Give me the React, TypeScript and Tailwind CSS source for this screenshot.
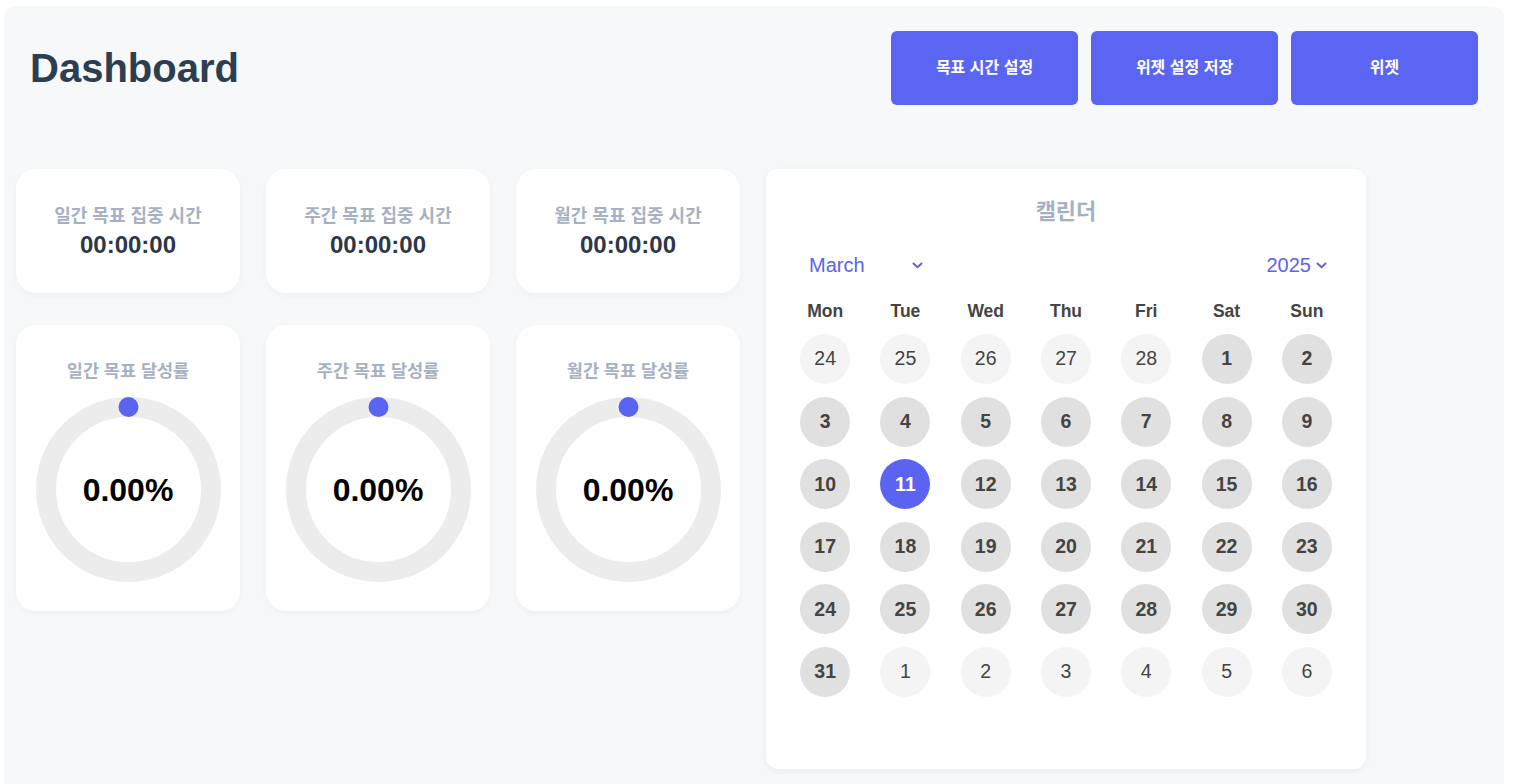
import React from 'react';

const FONT = { fontFamily: '"Liberation Sans", "Noto Sans CJK KR", Arial, sans-serif' };

const timeCards = ['일간 목표 집중 시간', '주간 목표 집중 시간', '월간 목표 집중 시간'];
const rateCards = ['일간 목표 달성률', '주간 목표 달성률', '월간 목표 달성률'];
const weekDays = ['Mon', 'Tue', 'Wed', 'Thu', 'Fri', 'Sat', 'Sun'];

type Day = { n: number; current: boolean };

const buildDays = (): Day[] => {
    const days: Day[] = [];
    for (let d = 24; d <= 28; d++) days.push({ n: d, current: false });
    for (let d = 1; d <= 31; d++) days.push({ n: d, current: true });
    for (let d = 1; d <= 6; d++) days.push({ n: d, current: false });
    return days;
};

const Chevron = () => (
    <svg width="11" height="7" viewBox="0 0 11 7" fill="none">
        <path d="M1.5 1.5 L5.5 5.2 L9.5 1.5" stroke="#5a64f0" strokeWidth="2" strokeLinecap="round" strokeLinejoin="round" />
    </svg>
);

const Ring = () => (
    <svg width="185" height="185" viewBox="0 0 185 185">
        <circle cx="92.5" cy="92.5" r="82.5" fill="none" stroke="#ececec" strokeWidth="20" />
        <circle cx="92.5" cy="10" r="10" fill="#5a64f0" />
    </svg>
);

const App = () => {
    const days = buildDays();

    return (
        <div className="bg-white min-h-screen pl-[4px] pt-[6px]" style={FONT}>
            <div className="w-[1500px] rounded-[12px] bg-[#f7f8fa] px-[12px] pb-[30px]">
                {/* header */}
                <div className="flex items-center justify-between px-[14px] pt-[25px]">
                    <h1 className="text-[40px] font-bold text-[#2c3e50] leading-none">Dashboard</h1>
                    <div className="flex gap-[13px]">
                        {['목표 시간 설정', '위젯 설정 저장', '위젯'].map((label) => (
                            <button
                                key={label}
                                className="w-[187px] h-[74px] rounded-[6px] bg-[#5a66f1] text-white text-[16px] font-semibold"
                            >
                                {label}
                            </button>
                        ))}
                    </div>
                </div>

                <div className="mt-[64px] flex gap-[26px] items-start">
                    {/* stat cards */}
                    <div className="grid grid-cols-3 gap-x-[26px] gap-y-[32px] w-[724px]">
                        {timeCards.map((title) => (
                            <div
                                key={title}
                                className="h-[124px] rounded-[20px] bg-white shadow-[0_2px_6px_rgba(0,0,0,0.04)] flex flex-col items-center justify-center"
                            >
                                <div className="text-[18px] leading-[24px] font-bold text-[#a5b1c2]">{title}</div>
                                <div className="mt-[4px] text-[24px] leading-[26px] font-bold text-[#2d3748]">00:00:00</div>
                            </div>
                        ))}
                        {rateCards.map((title) => (
                            <div
                                key={title}
                                className="h-[286px] rounded-[20px] bg-white shadow-[0_2px_6px_rgba(0,0,0,0.04)] flex flex-col items-center pt-[34px]"
                            >
                                <div className="text-[17.5px] leading-[24px] font-bold text-[#a5b1c2]">{title}</div>
                                <div className="relative mt-[14px] w-[185px] h-[185px]">
                                    <Ring />
                                    <div className="absolute inset-0 flex items-center justify-center text-[32px] font-bold text-black">
                                        0.00%
                                    </div>
                                </div>
                            </div>
                        ))}
                    </div>

                    {/* calendar */}
                    <div className="w-[600px] h-[600px] rounded-[12px] bg-white shadow-[0_2px_6px_rgba(0,0,0,0.06)] pt-[31px]">
                        <div className="text-center text-[22px] leading-[24px] font-bold text-[#a5b1c2]">캘린더</div>
                        <div className="mt-[26px] h-[30px] flex items-center justify-between pl-[43px] pr-[39px] text-[20px] text-[#5a64f0]">
                            <div className="w-[114px] flex items-center justify-between">
                                <span>March</span>
                                <Chevron />
                            </div>
                            <div className="flex items-center gap-[5px]">
                                <span>2025</span>
                                <Chevron />
                            </div>
                        </div>
                        <div className="px-[19px]">
                            <div className="mt-[18px] grid grid-cols-7 h-[22px] items-center">
                                {weekDays.map((d) => (
                                    <div key={d} className="text-center text-[17.5px] font-bold text-[#444]">{d}</div>
                                ))}
                            </div>
                            <div className="mt-[14px] grid grid-cols-7 gap-y-[12.6px]">
                                {days.map((d, i) => {
                                    const selected = d.current && d.n === 11;
                                    const cls = selected
                                        ? 'bg-[#5a64f0] text-white font-bold'
                                        : d.current
                                            ? 'bg-[#e0e0e0] text-[#444] font-bold'
                                            : 'bg-[#f4f4f4] text-[#444]';
                                    return (
                                        <div key={i} className="flex justify-center">
                                            <div className={`w-[50px] h-[50px] rounded-full flex items-center justify-center text-[19.5px] ${cls}`}>
                                                {d.n}
                                            </div>
                                        </div>
                                    );
                                })}
                            </div>
                        </div>
                    </div>
                </div>
            </div>
        </div>
    );
};

export default App;
